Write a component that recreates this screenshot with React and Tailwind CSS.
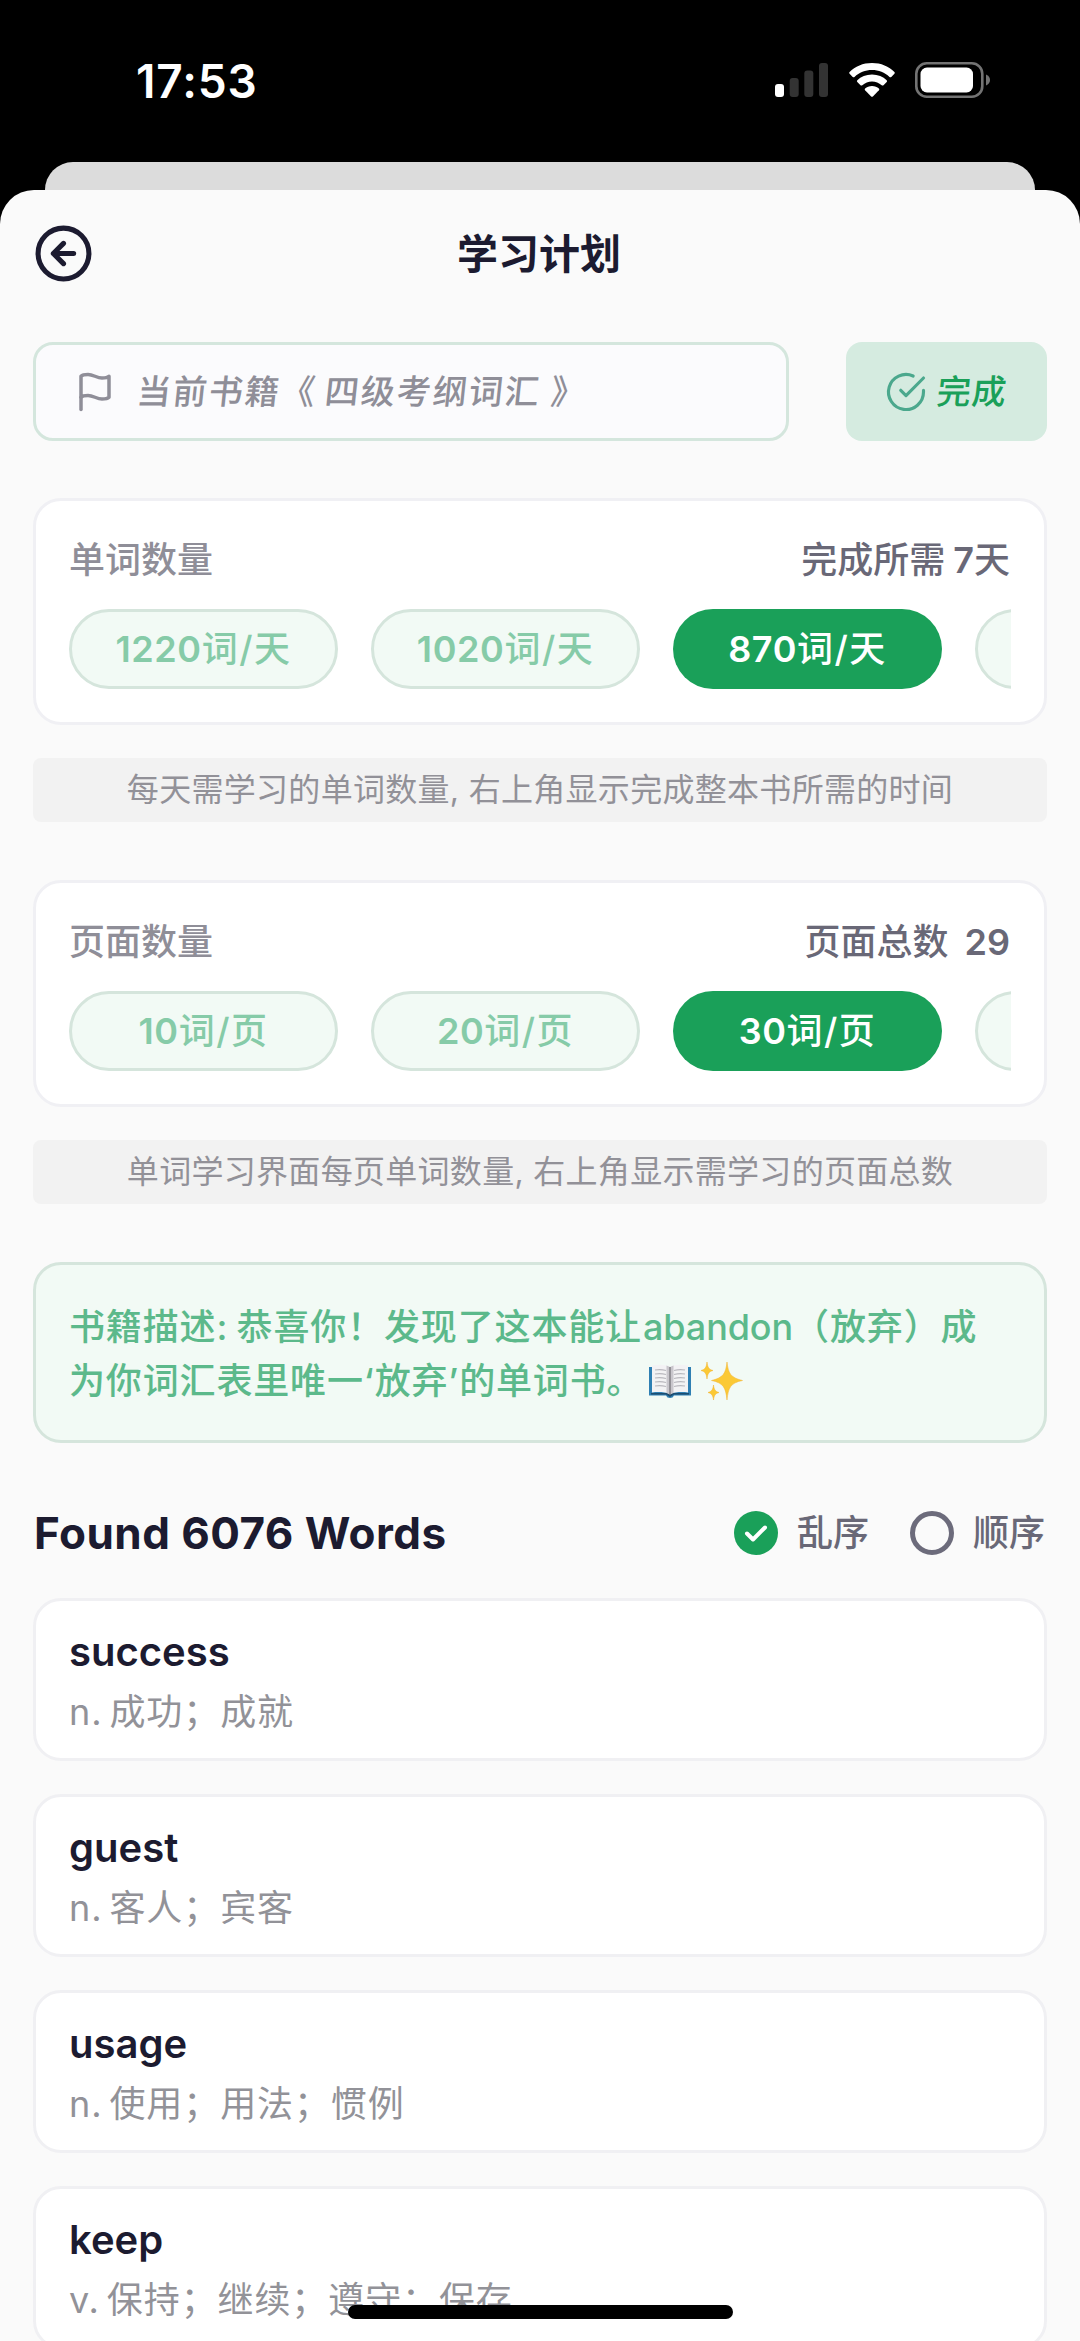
import { memo } from 'react';

const plans = [
  {
    title: '单词数量',
    label: '完成所需',
    count: '7',
    suffix: '天',
    hint: '每天需学习的单词数量, 右上角显示完成整本书所需的时间',
    unit: '词/天',
    options: [1220, 1020, 870],
    active: 870,
  },
  {
    title: '页面数量',
    label: '页面总数',
    count: '29',
    hint: '单词学习界面每页单词数量, 右上角显示需学习的页面总数',
    unit: '词/页',
    options: [10, 20, 30],
    active: 30,
  },
];

const words = [
  { word: 'success', meaning: 'n. 成功；成就' },
  { word: 'guest', meaning: 'n. 客人；宾客' },
  { word: 'usage', meaning: 'n. 使用；用法；惯例' },
  { word: 'keep', meaning: 'v. 保持；继续；遵守；保存' },
];

const StatusBar = () => (
  <div className="flex h-[162px] items-start justify-between pl-[136px] pr-[90px] pt-[62px] text-white">
    <span className="text-[46px] leading-[38px] font-semibold tracking-[0.900px]">17:53</span>
    <div className="flex h-[36px] items-center">
      <svg viewBox="0 0 53 34" className="h-[34px] w-[53px]">
        <rect x="0" y="21" width="9" height="13" rx="3" fill="#fff" />
        <rect x="14.7" y="15" width="9" height="19" rx="3" fill="#333" />
        <rect x="29.3" y="7.5" width="9" height="26.5" rx="3" fill="#333" />
        <rect x="44" y="0" width="9" height="34" rx="3" fill="#333" />
      </svg>
      <svg viewBox="0 0 46 34" className="ml-[21px] h-[34px] w-[46px]" fill="#fff">
        <path d="M23 0C32 0 40 3.4 45.4 8.9q.8.9 0 1.8L42.300 13.900q-.9.8-1.800 0C35.800 9.500 29.700 7 23 7S10.200 9.500 5.500 13.900q-.9.8-1.800 0L.6 10.700q-.8-.9 0-1.800C6 3.400 14 0 23 0z" />
        <path d="M23 11.500c6 0 11 2.200 14.700 5.700q.8.9 0 1.800l-3.200 3.200q-.9.8-1.800 0C30 19.900 26.700 18.500 23 18.500s-7 1.400-9.700 3.700q-.9.8-1.800 0L8.300 19q-.8-.9 0-1.800C12 13.700 17 11.500 23 11.500z" />
        <path d="M23 23c2.800 0 5.200 1 6.900 2.500q.8.800 0 1.700l-6 6.200q-.9.800-1.800 0l-6-6.200q-.8-.9 0-1.700C17.800 24 20.200 23 23 23z" />
      </svg>
      <svg viewBox="0 0 75 36" className="ml-[20px] h-[36px] w-[75px]">
        <rect x="1.300" y="1.300" width="66" height="33.400" rx="10.500" fill="none" stroke="#737373" strokeWidth="2.600" />
        <rect x="5.500" y="5.500" width="52.500" height="25" rx="6.500" fill="#fff" />
        <path d="M71 12.500c2.600 1.200 4 3.200 4 5.500s-1.400 4.300-4 5.500z" fill="#737373" />
      </svg>
    </div>
  </div>
);

const BackIcon = () => (
  <svg viewBox="0 0 24 24" fill="none" stroke="#1c1b30" strokeWidth="2" strokeLinecap="round" strokeLinejoin="round" className="-mt-[2px] h-[61px] w-[61px]">
    <circle cx="12" cy="12" r="10" />
    <path d="M16 12H8M12 8l-4 4 4 4" />
  </svg>
);

const FlagIcon = () => (
  <svg viewBox="0 0 24 24" fill="none" stroke="#8f8e98" strokeWidth="2" strokeLinecap="round" strokeLinejoin="round" className="h-[42px] w-[42px]">
    <path d="M4 15s1-1 4-1 5 2 8 2 4-1 4-1V3s-1 1-4 1-5-2-8-2-4 1-4 1z" />
    <path d="M4 22v-7" />
  </svg>
);

const CheckCircleIcon = () => (
  <svg viewBox="0 0 24 24" fill="none" stroke="#4ba88d" strokeWidth="1.8" strokeLinecap="round" strokeLinejoin="round" className="h-[42px] w-[42px]">
    <path d="M22 11.080V12a10 10 0 1 1-5.930-9.140" />
    <path d="M22 4 12 14.010l-3-3" />
  </svg>
);

const BookEmoji = () => (
  <svg viewBox="0 0 42 34" className="ml-[6px] h-[34px] w-[42px]">
    <path d="M0 3h42v28.500H25q-1 2.500-4 2.500t-4-2.500H0z" fill="#2f7fb3" />
    <path d="M2 29h38v1.500H25l-4 2.500-4-2.500H2z" fill="#1d4d70" />
    <path d="M3 1.500C9 0 17 .5 21 3v27c-5-2-12-2.500-18-1.500z" fill="#f3f2f4" />
    <path d="M39 1.500C33 0 25 .5 21 3v27c5-2 12-2.500 18-1.500z" fill="#f3f2f4" />
    <path d="M17.500 1.500 21 3l3.500-1.500V29L21 30.500 17.500 29z" fill="#c9c6cc" />
    <path d="M21 3v27.500" stroke="#77757b" strokeWidth="1.300" />
    <path d="M6 6c4-.6 8-.3 11 .5M6 10c4-.6 8-.3 11 .5M6 14c4-.6 8-.3 11 .5M6 18c4-.6 8-.3 11 .5M6 22c4-.6 8-.3 11 .5M36 6c-4-.6-8-.3-11 .5M36 10c-4-.6-8-.3-11 .5M36 14c-4-.6-8-.3-11 .5M36 18c-4-.6-8-.3-11 .5M36 22c-4-.6-8-.3-11 .5" fill="none" stroke="#b9b8be" strokeWidth="1.200" />
  </svg>
);

const SparklesEmoji = () => (
  <svg viewBox="0 0 42 40" className="ml-[10px] h-[40px] w-[42px]" fill="#fbc935" stroke="#f3b02c" strokeWidth=".5">
    <path d="M26 1c1.300 11.500 3.500 15.500 15.500 18.500C29.500 22 27.300 26.500 26 39c-1.300-12.500-3.500-17-15.500-19.500C22.500 16.500 24.700 12.500 26 1z" />
    <path d="M6 1c.7 5.500 1.700 7.300 6 8.500-4.300 1.200-5.300 3-6 8.500-.7-5.500-1.700-7.300-6-8.500C4.300 8.300 5.300 6.500 6 1z" />
    <path d="M12.500 24c.6 4.600 1.600 6.400 5.500 7.500-3.900 1.100-4.900 2.900-5.500 7.500-.6-4.600-1.600-6.400-5.500-7.500 3.900-1.100 4.900-2.900 5.500-7.500z" />
  </svg>
);

const Pill = ({ value, unit, active }) => (
  <div
    className={
      active
        ? 'flex h-[80px] w-[269px] shrink-0 items-center justify-center rounded-full bg-[#1aa059] text-white'
        : 'flex h-[80px] w-[269px] shrink-0 items-center justify-center rounded-full border-3 border-[#d5e5dc] bg-[#f2faf5] text-[#86cba8]'
    }
  >
    <span className="text-[36px] font-semibold tracking-[0.600px]">{value}</span>
    <span className="text-[36px] font-medium tracking-[1.500px]">{unit}</span>
  </div>
);

const PlanSection = memo(({ plan }) => (
  <section className="mb-[58px]">
    <div className="h-[227px] rounded-[28px] border-3 border-[#f0f0f4] bg-white px-[33px] pt-[35px]">
      <div className="flex h-[48px] items-center justify-between pr-[1px] text-[36px] font-medium">
        <span className="text-[#8f8e98]">{plan.title}</span>
        <span className="flex items-center text-[#696877]">
          {plan.label}
          <span className={plan.suffix ? 'ml-[8px] font-semibold' : 'ml-[16px] font-semibold'}>{plan.count}</span>
          {plan.suffix}
        </span>
      </div>
      <div className="mt-[25px] flex gap-[33px] overflow-hidden">
        {plan.options.map((value) => (
          <Pill key={value} value={value} unit={plan.unit} active={value === plan.active} />
        ))}
        {/* next option peeks in from the right edge */}
        <Pill />
      </div>
    </div>
    <p className="mt-[33px] flex h-[64px] items-center justify-center rounded-[8px] bg-[#f2f2f2] text-[32px] tracking-[0.300px] whitespace-nowrap text-[#929198]">
      {plan.hint}
    </p>
  </section>
));

const WordCard = ({ word, meaning }) => (
  <li className="h-[163px] shrink-0 rounded-[28px] border-3 border-[#f0f0f3] bg-white px-[33px] pt-[25px]">
    <h3 className="text-[40px] leading-[52px] font-semibold text-[#1c1b30]">{word}</h3>
    <p className="mt-[7px] text-[36px] leading-[54px] tracking-[0.900px] text-[#929298] [word-spacing:-4px]">{meaning}</p>
  </li>
);

export default function App() {
  return (
    <div className="relative h-[2341px] w-[1080px] overflow-hidden bg-black font-['Inter','Noto_Sans_CJK_SC',sans-serif]">
      <StatusBar />
      <div className="mx-[45px] h-[28px] rounded-t-[28px] bg-[#dcdcdc]" />
      <main className="h-[2151px] rounded-t-[34px] bg-[#fafafa] px-[33px]">
        <header className="grid h-[128px] grid-cols-[61px_1fr_61px] items-center">
          <BackIcon />
          <h1 className="mt-[2px] mr-[2px] text-center text-[41px] font-semibold text-[#1c1b30]">学习计划</h1>
        </header>

        <div className="mt-[24px] mb-[57px] flex h-[99px] justify-between">
          <div className="flex w-[756px] items-center rounded-[20px] border-3 border-[#d4e6dd] bg-[#fbfbfd] pl-[38px]">
            <FlagIcon />
            <span className="ml-[21px] inline-flex -skew-x-6 text-[34px] font-medium tracking-[2px] text-[#8f8e98]">
              当前书籍<span className="mr-[8px]">《</span>四级考纲词汇<span className="ml-[10px]">》</span>
            </span>
          </div>
          <div className="flex w-[201px] items-center rounded-[16px] bg-[#d5ebe0] pl-[39px]">
            <CheckCircleIcon />
            <span className="ml-[10px] -skew-x-6 text-[34px] font-medium tracking-[1px] text-[#1aa059]">完成</span>
          </div>
        </div>

        {plans.map((plan) => (
          <PlanSection key={plan.title} plan={plan} />
        ))}

        <div className="h-[181px] rounded-[28px] border-3 border-[#d5e5dc] bg-[#f2faf5] px-[33px] pt-[35px] text-[36px] leading-[54px] font-medium tracking-[0.850px] whitespace-nowrap text-[#5cb98b]">
          <div className="[word-spacing:-2px]">
            书籍描述: 恭喜你！发现了这本能让<span className="ml-[1px] tracking-[-0.100px]">abandon</span>（放弃）成
          </div>
          <div className="flex items-center">
            为你词汇表里唯一‘放弃’的单词书。
            <BookEmoji />
            <SparklesEmoji />
          </div>
        </div>

        <div className="mt-[55px] mb-[30px] flex h-[70px] items-center pr-[2px]">
          <h2 className="mr-auto ml-[1px] text-[44px] font-bold tracking-[0.450px] text-[#1c1b30]">Found 6076 Words</h2>
          <svg viewBox="0 0 44 44" className="h-[44px] w-[44px]">
            <circle cx="22" cy="22" r="22" fill="#1aa059" />
            <path d="m13 22.500 6 6L31 16.500" fill="none" stroke="#fff" strokeWidth="4" strokeLinecap="round" strokeLinejoin="round" />
          </svg>
          <span className="ml-[19px] text-[36px] font-medium text-[#696877]">乱序</span>
          <span className="ml-[41px] h-[44px] w-[44px] rounded-full border-5 border-[#6c6b7b]" />
          <span className="ml-[19px] text-[36px] font-medium text-[#696877]">顺序</span>
        </div>

        <ul className="flex flex-col gap-[33px]">
          {words.map((item) => (
            <WordCard key={item.word} word={item.word} meaning={item.meaning} />
          ))}
        </ul>
      </main>
      <div className="absolute bottom-[22px] left-[348px] h-[14px] w-[385px] rounded-full bg-black" />
    </div>
  );
}
